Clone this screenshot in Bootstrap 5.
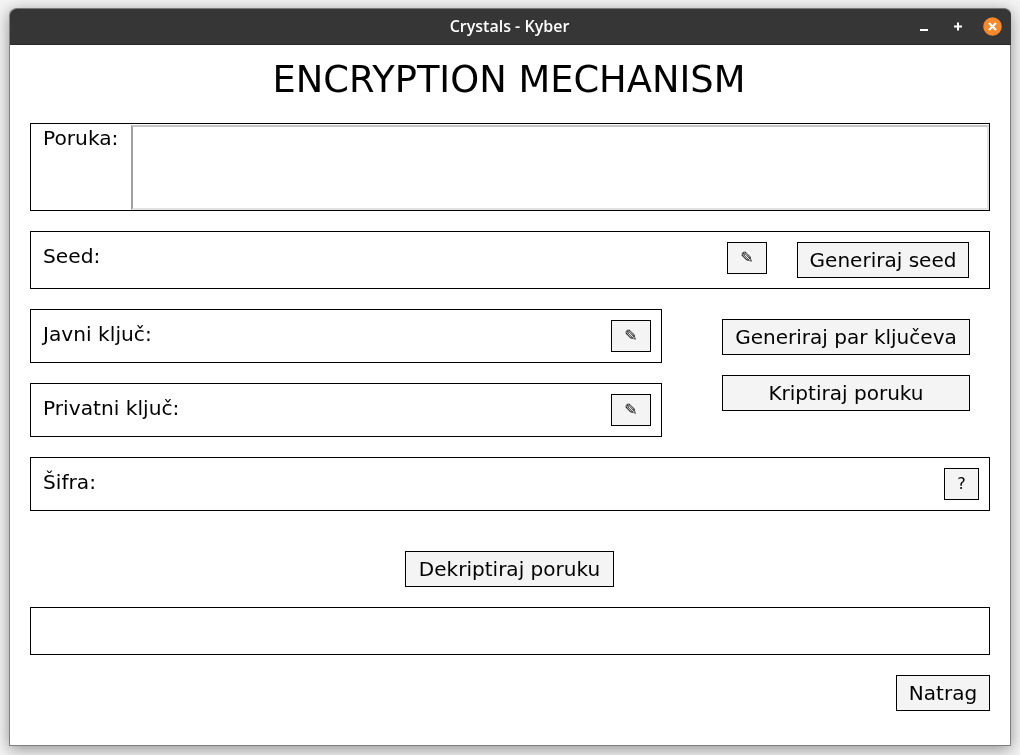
<!DOCTYPE html>
<html lang="hr">
<head>
<meta charset="utf-8">
<title>Crystals - Kyber</title>
<link rel="stylesheet" href="https://cdn.jsdelivr.net/npm/bootstrap@5.3.0/dist/css/bootstrap.min.css">
<style>
html,body{height:755px;overflow:hidden;background:#f4f4f4;}
body{font-family:"DejaVu Sans",sans-serif;color:#000;}
.win{width:1002px;height:738px;margin:8px 0 0 9px;background:#fff;border:1px solid #7f7f7f;border-top:0;border-radius:7px 7px 0 0;box-shadow:0 3px 16px rgba(0,0,0,.42);will-change:transform;}
.tbar{height:37px;margin:0 -1px 0 0;padding-right:2px;background:#363636;border-radius:7px 7px 0 0;border-top:1px solid #777;border-bottom:1px solid #2a2a2a;color:#fff;position:relative;font:600 16px/35px "Open Sans",sans-serif;}
.tctl{position:absolute;top:0;right:0;}
.content{padding:0 20px;}
.heading{font-size:36.8px;line-height:44px;padding:13px 2px 21px 0;margin:0;font-weight:400;text-align:center;}
.box{border:1px solid #000;font-size:20.2px;line-height:24px;padding:0 10px 0 12px;position:relative;}
.lbl{flex-grow:1;padding-top:2px;}
.b-msg{height:88px;padding:1px 0 0 12px;}
.b-msg .lbl{width:88px;flex:none;padding-top:1px;}
.fake-ta{flex:1;height:85px;border:2px solid;border-color:#c4c4c4 #e2e2e2 #e2e2e2 #a0a0a0;background:#fff;resize:none;border-radius:0;padding:0;display:block;}
.b-seed{height:58px;padding:10px 20px 0 12px;}
.b-key{height:54px;padding-top:10px;}
.b-out{height:48px;}
.sbtn{background:#f4f4f4;border:1px solid #000;border-radius:0;color:#000;padding:0;font-size:20.05px;line-height:24px;height:36px;}
.sbtn:hover{background:#f4f4f4;border-color:#000;color:#000;}
.pen{width:40px;height:32px;font-size:16px;line-height:20px;}
.keycol{width:632px;}
.actcol{width:248px;margin-left:60px;padding-top:10px;gap:20px;}
.w-gs{width:172px;margin-left:30px;}
.w-q{width:35px;height:32px;font-size:16px;}
.w-d{width:209px;}
.w-n{width:94px;}
.dk{padding-right:1px;}
.mt20{margin-top:20px;}
.mt40{margin-top:40px;}
</style>
</head>
<body>
<div class="win">
  <div class="tbar text-center">Crystals - Kyber
    <svg class="tctl" width="100" height="36" viewBox="0 0 100 36">
      <rect x="9" y="20" width="8" height="2" fill="#fff"/>
      <path d="M43 17.500h8M47 13.500v8" stroke="#fff" stroke-width="2" fill="none"/>
      <circle cx="81.500" cy="17.500" r="9.300" fill="#f6892b"/>
      <path d="M78 14l7 7M85 14l-7 7" stroke="#fff" stroke-width="2.200" fill="none"/>
    </svg>
  </div>
  <div class="content">
    <h1 class="heading">ENCRYPTION MECHANISM</h1>
    <div class="box b-msg d-flex">
      <div class="lbl">Poruka:</div>
      <textarea class="fake-ta" aria-label="Poruka"></textarea>
    </div>
    <div class="box b-seed mt20 d-flex align-items-start">
      <div class="lbl">Seed:</div>
      <button class="btn sbtn pen" type="button">✎</button>
      <button class="btn sbtn w-gs" type="button">Generiraj seed</button>
    </div>
    <div class="d-flex mt20">
      <div class="keycol">
        <div class="box b-key d-flex align-items-start">
          <div class="lbl">Javni ključ:</div>
          <button class="btn sbtn pen" type="button">✎</button>
        </div>
        <div class="box b-key mt20 d-flex align-items-start">
          <div class="lbl">Privatni ključ:</div>
          <button class="btn sbtn pen" type="button">✎</button>
        </div>
      </div>
      <div class="actcol d-flex flex-column">
        <button class="btn sbtn w-100" type="button">Generiraj par ključeva</button>
        <button class="btn sbtn w-100" type="button">Kriptiraj poruku</button>
      </div>
    </div>
    <div class="box b-key mt20 d-flex align-items-start">
      <div class="lbl">Šifra:</div>
      <button class="btn sbtn w-q" type="button">?</button>
    </div>
    <div class="text-center mt40 dk"><button class="btn sbtn w-d" type="button">Dekriptiraj poruku</button></div>
    <div class="box b-out mt20"></div>
    <div class="d-flex justify-content-end mt20"><button class="btn sbtn w-n" type="button">Natrag</button></div>
  </div>
</div>
</body>
</html>
